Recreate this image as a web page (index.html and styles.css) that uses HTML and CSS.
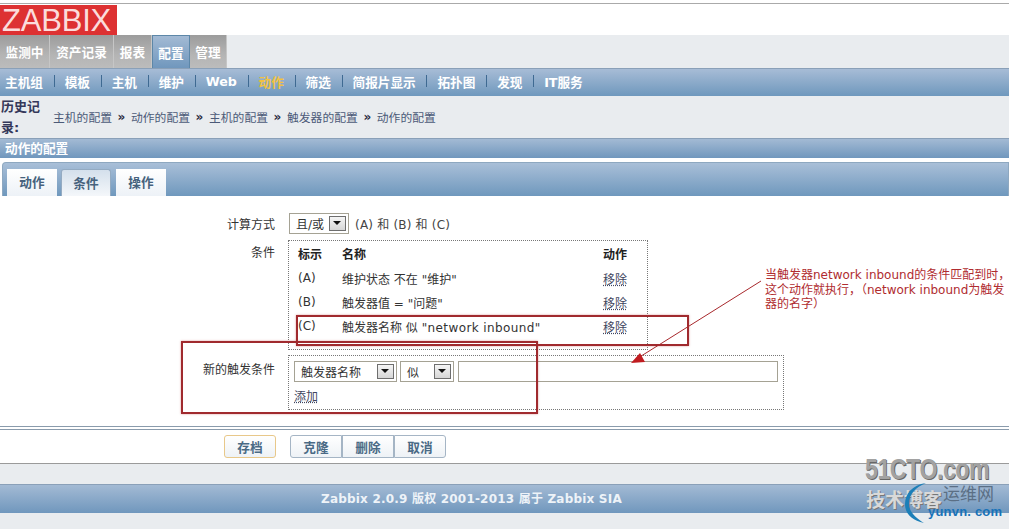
FILE: index.html
```html
<!DOCTYPE html>
<html lang="zh-CN">
<head>
    <meta charset="UTF-8">
    <meta name="viewport" content="width=device-width, initial-scale=1.0">
    <title>动作的配置</title>
    <link rel="stylesheet" href="styles.css">
</head>
<body>
    <div class="page">
        <div class="logo-row">
            <div class="logo">ZABBIX</div>
        </div>

        <div class="main-nav">
            <a class="main-tab tab-1">监测中</a>
            <a class="main-tab tab-2">资产记录</a>
            <a class="main-tab tab-3">报表</a>
            <a class="main-tab tab-4 active">配置</a>
            <a class="main-tab tab-5">管理</a>
        </div>

        <div class="sub-nav">
            <a>主机组</a><i></i>
            <a>模板</a><i></i>
            <a>主机</a><i></i>
            <a>维护</a><i></i>
            <a>Web</a><i></i>
            <a class="current">动作</a><i></i>
            <a>筛选</a><i></i>
            <a>简报片显示</a><i></i>
            <a>拓扑图</a><i></i>
            <a>发现</a><i></i>
            <a>IT服务</a>
        </div>

        <div class="history">
            <div class="history-label">历史记录:</div>
            <div class="crumbs">
                <span>主机的配置</span><b>»</b>
                <span>动作的配置</span><b>»</b>
                <span>主机的配置</span><b>»</b>
                <span>触发器的配置</span><b>»</b>
                <span>动作的配置</span>
            </div>
        </div>

        <div class="title-bar">动作的配置</div>

        <div class="tab-strip">
            <a class="tab">动作</a>
            <a class="tab selected">条件</a>
            <a class="tab">操作</a>
        </div>

        <div class="form">
            <div class="form-row calc-row">
                <div class="form-label">计算方式</div>
                <div class="select select-calc"><span>且/或</span><i class="arrow"></i></div>
                <div class="calc-text">(A) 和 (B) 和 (C)</div>
            </div>

            <div class="form-row conditions-row">
                <div class="form-label">条件</div>
                <table class="conditions">
                    <tr>
                        <th class="col-id">标示</th>
                        <th class="col-name">名称</th>
                        <th class="col-action">动作</th>
                    </tr>
                    <tr>
                        <td>(A)</td>
                        <td>维护状态 不在 "维护"</td>
                        <td><a class="link">移除</a></td>
                    </tr>
                    <tr>
                        <td>(B)</td>
                        <td>触发器值 = "问题"</td>
                        <td><a class="link">移除</a></td>
                    </tr>
                    <tr>
                        <td>(C)</td>
                        <td>触发器名称 似 <span class="latin">"network inbound"</span></td>
                        <td><a class="link">移除</a></td>
                    </tr>
                </table>
            </div>

            <div class="form-row new-row">
                <div class="form-label">新的触发条件</div>
                <div class="new-box">
                    <div class="new-fields">
                        <div class="select select-name"><span>触发器名称</span><i class="arrow"></i></div>
                        <div class="select select-op"><span>似</span><i class="arrow"></i></div>
                        <input class="value-input" type="text">
                    </div>
                    <a class="link add-link">添加</a>
                </div>
            </div>
        </div>

        <div class="actions">
            <a class="btn btn-save">存档</a>
            <div class="btn-group">
                <a class="btn">克隆</a>
                <a class="btn">删除</a>
                <a class="btn">取消</a>
            </div>
        </div>

        <div class="footer-gap"></div>
        <div class="footer">Zabbix 2.0.9 版权 2001-2013 属于 Zabbix SIA</div>
        <div class="footer-end"></div>

        <!-- annotations drawn over the screenshot -->
        <div class="mark mark-c"></div>
        <div class="mark mark-new"></div>
        <svg class="arrow-line" width="1009" height="529" viewBox="0 0 1009 529">
            <line x1="761" y1="281" x2="638" y2="358" stroke="#a8282c" stroke-width="1"/>
            <polygon points="631,363 640,353 645,362" fill="#c01c20"/>
        </svg>
        <div class="note">当触发器network inbound的条件匹配到时，<br>这个动作就执行，（network inbound为触发<br>器的名字）</div>

        <!-- watermark -->
        <div class="wm wm-51">51CTO.com</div>
        <div class="wm wm-blog">技术博客</div>
        <div class="wm wm-yw">运维网</div>
        <div class="wm wm-yun">yunvn. com</div>
        <svg class="wm-arc" width="30" height="42" viewBox="0 0 30 42">
            <path d="M22 1 C8 3 1 12 1 22 C1 32 8 38 20 41 C12 36 5 30 5 22 C5 12 12 5 22 1 Z" fill="#1c7fb8"/>
        </svg>
    </div>
</body>
</html>
```

FILE: styles.css
```css
* {
    box-sizing: border-box;
}

html, body {
    margin: 0;
    height: 529px;
    overflow: hidden;
}

body {
    font-family: "DejaVu Sans", "Noto Sans CJK SC", sans-serif;
    font-size: 12px;
    color: #333;
    background: #fff;
}

.page {
    position: relative;
    width: 1009px;
    height: 529px;
    overflow: hidden;
}

a {
    cursor: pointer;
}

/* header */
.logo-row {
    height: 35px;
    padding-top: 4px;
    border-top: 1px solid #fff;
    background: linear-gradient(#fff 2px, #aaa 2px, #aaa 3px, #fff 3px);
}

.logo {
    width: 117px;
    height: 31px;
    padding-left: 2px;
    background: #dd3132;
    color: #fbdcdc;
    font-family: "Liberation Sans", sans-serif;
    font-size: 31px;
    line-height: 32px;
    letter-spacing: -0.2px;
}

.main-nav {
    display: flex;
    height: 33px;
    background: #e9ecef;
}

.main-tab {
    display: flex;
    align-items: center;
    justify-content: center;
    height: 33px;
    background: linear-gradient(#9c9c9c, #b4b4b4 60%, #bcbcbc);
    border-right: 1px solid #c6c6c6;
    color: #fff;
    font-size: 12.67px;
    font-weight: bold;
}

.tab-1 { width: 50px; }
.tab-2 { width: 64px; }
.tab-3 { width: 38px; }
.tab-4 { width: 38px; }
.tab-5 { width: 37px; }

.main-tab.active {
    background: linear-gradient(#a3bad4, #7097bd);
    border: 1px solid #5d87a8;
    border-bottom: 0;
}

.sub-nav {
    display: flex;
    align-items: center;
    height: 28px;
    padding: 0 0 3px 5px;
    background: linear-gradient(#a7bcd6, #6f98bd);
    border-top: 1px solid #8aa0b8;
    color: #fff;
    font-size: 12.67px;
    font-weight: bold;
}

.sub-nav i {
    width: 1px;
    height: 12px;
    margin: 0 10px 0 10.7px;
    background: #3f6a92;
}

.sub-nav .current {
    color: #f2c240;
}

.history {
    display: flex;
    align-items: center;
    height: 42px;
    background: #e9ecef;
}

.history-label {
    width: 53px;
    padding: 0 8px 0 1px;
    color: #35385a;
    font-size: 13px;
    font-weight: bold;
    line-height: 21px;
}

.crumbs {
    display: flex;
    align-items: center;
    padding-bottom: 1px;
    color: #4c5a78;
    font-size: 11.8px;
}

.crumbs b {
    width: 19px;
    text-align: center;
    color: #2a2a40;
    font-size: 12px;
}

.title-bar {
    height: 20px;
    padding-left: 5px;
    background: linear-gradient(#a3bad4, #7097bd);
    border-top: 1px solid #8aa0b8;
    color: #fff;
    font-size: 12.67px;
    font-weight: bold;
    line-height: 20px;
}

.tab-strip {
    display: flex;
    align-items: flex-end;
    gap: 4px;
    height: 34px;
    margin: 4px 0 0 2px;
    padding-left: 4px;
    background: linear-gradient(#a9bfd8, #6f98bd);
    border: 1px solid #8ea8c0;
    border-bottom: 0;
    border-radius: 4px 0 0 0;
}

.tab {
    display: flex;
    align-items: center;
    justify-content: center;
    width: 50px;
    height: 27px;
    padding-bottom: 2px;
    background: linear-gradient(#fff, #edf2f7);
    color: #46627d;
    font-size: 12.67px;
    font-weight: bold;
}

.tab.selected {
    margin-right: 1px;
    background: linear-gradient(#d4e0ec, #f4f7fa);
    border: 1px solid #94abc2;
    border-bottom: 0;
    border-radius: 3px 3px 0 0;
}

/* form */
.form {
    height: 231px;
    padding-top: 17px;
    border-bottom: 1px solid #8a9bac;
}

.form-row {
    display: flex;
    align-items: flex-start;
}

.form-label {
    width: 275px;
    margin-right: 13px;
    text-align: right;
    color: #333;
}

.calc-row {
    align-items: center;
    height: 20px;
}

.calc-row .select {
    margin-left: 1px;
}

.calc-text {
    margin-left: 6px;
    color: #444;
    letter-spacing: 0.2px;
}

.select {
    display: flex;
    align-items: center;
    justify-content: space-between;
    height: 21px;
    padding: 0 2px 0 6px;
    border: 1px solid #a5a294;
    background: #fff;
    color: #333;
}

.select-calc { width: 60px; }
.select-name { width: 103px; }
.select-op { width: 54px; }

.arrow {
    position: relative;
    width: 17px;
    height: 15px;
    background: linear-gradient(#f5f5f5, #d6d6d6);
    border: 1px solid #6e6e6e;
}

.arrow::after {
    content: "";
    position: absolute;
    left: 3px;
    top: 4px;
    border: 4px solid transparent;
    border-top: 4px solid #111;
    border-bottom: 0;
}

.conditions-row {
    margin-top: 7px;
}

.conditions-row .form-label {
    margin-top: 3px;
}

.conditions {
    width: 360px;
    height: 104px;
    border: 1px dotted #777;
    border-collapse: separate;
    border-spacing: 0;
    table-layout: fixed;
    padding: 1px 0 11px;
}

.conditions th,
.conditions td {
    padding: 0;
    text-align: left;
    font-size: 12px;
    height: 24px;
}

.conditions th {
    color: #222;
    font-weight: bold;
    padding-bottom: 1px;
}

.col-id { width: 53px; padding-left: 9px !important; }
.col-name { width: 261px; }
.col-action { width: 44px; }

.conditions td:first-child {
    padding-left: 9px;
}

.latin {
    letter-spacing: 0.4px;
}

.link {
    color: #3f4660;
    text-decoration: underline;
    text-decoration-style: dotted;
}

.new-row {
    margin-top: 5px;
}

.new-row .form-label {
    margin-top: 5px;
}

.new-box {
    width: 496px;
    height: 55px;
    padding: 5px;
    border: 1px dotted #777;
}

.new-fields {
    display: flex;
    gap: 3px;
}

.value-input {
    width: 320px;
    height: 21px;
    margin-left: 1px;
    border: 1px solid #a5a294;
}

.add-link {
    display: block;
    margin-top: 5px;
}

.actions {
    display: flex;
    gap: 14px;
    height: 35px;
    margin-top: 2px;
    padding: 5px 0 0 224px;
    border-top: 1px solid #8a9bac;
    border-bottom: 1px solid #9a9a9a;
}

.btn-group {
    display: flex;
}

.btn {
    display: flex;
    align-items: center;
    justify-content: center;
    width: 52px;
    height: 23px;
    background: linear-gradient(#fff, #eef2f6);
    border: 1px solid #a5b5c5;
    color: #4a6a85;
    font-size: 12.67px;
    font-weight: bold;
}

.btn-group .btn:first-child { border-radius: 3px 0 0 3px; }
.btn-group .btn:last-child { border-radius: 0 3px 3px 0; }

.btn-save {
    border-color: #e8c88a;
    border-radius: 3px;
}

.footer-gap {
    height: 20px;
    background: #e9ecef;
}

.footer {
    height: 29px;
    padding-left: 321px;
    background: linear-gradient(#a3bad4, #7097bd);
    border-top: 1px solid #8aa0b8;
    color: #eef3f8;
    font-size: 12px;
    font-weight: bold;
    letter-spacing: 0.2px;
    line-height: 28px;
}

.footer-end {
    height: 16px;
    background: #e9ecef;
}

/* annotations */
.mark {
    position: absolute;
    border: 2px solid #a02a2e;
    box-shadow: 0 0 2px rgba(190, 60, 60, 0.5);
}

.mark-c {
    left: 296px;
    top: 315px;
    width: 393px;
    height: 31px;
}

.mark-new {
    left: 181px;
    top: 341px;
    width: 357px;
    height: 73px;
}

.arrow-line {
    position: absolute;
    left: 0;
    top: 0;
}

.note {
    position: absolute;
    left: 765px;
    top: 268px;
    width: 240px;
    color: #b02c30;
    font-size: 12px;
    line-height: 14.5px;
    white-space: nowrap;
}

/* watermark */
.wm {
    position: absolute;
    white-space: nowrap;
}

.wm-51 {
    left: 865px;
    top: 453px;
    color: #a2a2a2;
    font-family: "Liberation Sans", sans-serif;
    font-size: 29px;
    font-weight: bold;
    letter-spacing: -0.6px;
    transform: scaleX(0.8);
    transform-origin: left;
    text-shadow: 1px 1px 0 #666;
}

.wm-blog {
    left: 866px;
    top: 489px;
    color: #d9d9d9;
    font-size: 19px;
    font-weight: bold;
    line-height: 22px;
    text-shadow: 1px 1px 0 #777;
}

.wm-yw {
    left: 943px;
    top: 485px;
    color: #5b6f85;
    font-size: 17px;
    line-height: 19px;
}

.wm-yun {
    left: 928px;
    top: 505px;
    color: #1872b8;
    font-family: "Liberation Sans", sans-serif;
    font-size: 13px;
    font-weight: bold;
    letter-spacing: 0.2px;
    line-height: 14px;
}

.wm-arc {
    position: absolute;
    left: 904px;
    top: 482px;
}
```
